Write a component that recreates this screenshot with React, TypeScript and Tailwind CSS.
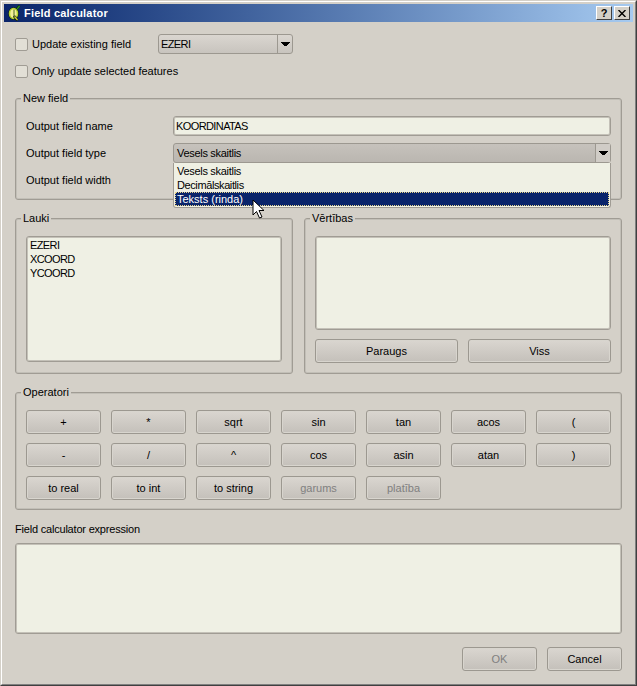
const btn =
  "flex h-[24px] items-center justify-center rounded-[3px] border border-[#9c9890] bg-gradient-to-b from-[#dad6d0] to-[#c4c0ba] text-[11px] shadow-[inset_0_0_0_1px_#d8d5ce]";
const field = "rounded-[3px] border border-[#a09c94] bg-[#eff0e4] shadow-[inset_0_0_0_1px_#c4c1b8]";

function Check({ label }: { label: string }) {
  return (
    <label className="flex items-center gap-[4px]">
      <span className="h-[13px] w-[13px] rounded-[2px] border border-[#a09c94] bg-[#e2dfd6]" />
      <span>{label}</span>
    </label>
  );
}

function Arrow() {
  return (
    <svg width="9" height="5" viewBox="0 0 9 5" className="block">
      <path d="M0 0h9v1h-1v1h-1v1h-1v1h-3v-1h-1v-1h-1v-1h-1z" fill="#000" />
    </svg>
  );
}

function Group({ title, className, children }: { title: string; className?: string; children: React.ReactNode }) {
  return (
    <fieldset className={`m-0 rounded-[3px] border border-[#a09c94] p-0 shadow-[inset_0_0_0_1px_#c2bfb7] ${className ?? ""}`}>
      <legend className="relative ml-[5px] h-[14px] bg-[#d4d0c8] px-[2px] text-[11px] leading-[14px]">{title}</legend>
      {children}
    </fieldset>
  );
}

const ops = [
  "+", "*", "sqrt", "sin", "tan", "acos", "(",
  "-", "/", "^", "cos", "asin", "atan", ")",
  "to real", "to int", "to string",
];

export default function App() {
  return (
    <div className="relative h-[686px] w-[637px] border border-b-[#404040] border-l-[#d4d0c8] border-r-[#404040] border-t-[#d4d0c8] bg-[#d4d0c8] font-['Liberation_Sans',sans-serif] text-[11px] text-black">
      <div className="h-full border border-b-[#808080] border-l-white border-r-[#808080] border-t-white p-[2px]">
        {/* Title bar */}
        <div className="flex h-[18px] items-center bg-gradient-to-r from-[#0a246a] to-[#a6caf0] pl-[4px] pr-[3px]">
          <svg width="14" height="17" viewBox="0 0 14 17" className="mr-[2px] mt-[-1px] shrink-0">
            <path d="M7 7l4.500-5.500" stroke="#0b3a12" strokeWidth="2.600" />
            <path d="M7.500 7l4-5" stroke="#2f9a2a" strokeWidth="1.200" />
            <ellipse cx="5.500" cy="9.500" rx="4" ry="5" fill="#0b1a10" stroke="#0b1a10" strokeWidth="2.400" />
            <ellipse cx="5.500" cy="9.500" rx="4" ry="5" fill="#f2ee9a" stroke="#b4d331" strokeWidth="1.500" />
            <path d="M6 5.500v8" stroke="#4a6a20" strokeWidth="1" />
            <path d="M6 12l3.500 4.500" stroke="#0b1a10" strokeWidth="2.600" />
            <path d="M6.500 12.500l3 3.500" stroke="#d6d43c" strokeWidth="1.200" />
          </svg>
          <span className="text-[11px] font-bold tracking-[0.2px] text-white">Field calculator</span>
          <div className="ml-auto flex gap-[2px]">
            <div className="flex h-[14px] w-[16px] items-center justify-center border border-b-[#404040] border-l-white border-r-[#404040] border-t-white bg-[#d4d0c8] text-[11px] font-bold leading-none">
              ?
            </div>
            <div className="flex h-[14px] w-[16px] items-center justify-center border border-b-[#404040] border-l-white border-r-[#404040] border-t-white bg-[#d4d0c8]">
              <svg width="8" height="7" viewBox="0 0 8 7">
                <path d="M0.500 0l7 7M7.500 0l-7 7" stroke="#000" strokeWidth="1.400" />
              </svg>
            </div>
          </div>
        </div>

        <div className="px-[11px]">
          {/* Update options */}
          <div className="mt-[12px] flex h-[20px] items-center">
            <div className="w-[143px]">
              <Check label="Update existing field" />
            </div>
            <div className="flex h-[20px] w-[135px] rounded-[3px] border border-[#9c9890] bg-gradient-to-b from-[#dad6d0] to-[#c8c4be]">
              <span className="flex-1 pl-[2px] leading-[18px] tracking-[-0.6px]">EZERI</span>
              <span className="flex w-[15px] items-center justify-center border-l border-[#9c9890]">
                <Arrow />
              </span>
            </div>
          </div>
          <div className="mt-[7px] flex h-[20px] items-center">
            <Check label="Only update selected features" />
          </div>

          {/* New field */}
          <Group title="New field" className="mt-[10px]">
            <div className="flex flex-col gap-[7px] px-[10px] pb-[9px] pt-[11px]">
              <div className="flex h-[20px] items-center">
                <span className="w-[147px]">Output field name</span>
                <div className={`h-[20px] flex-1 pl-[2px] leading-[18px] tracking-[-0.6px] ${field}`}>
                  KOORDINATAS
                </div>
              </div>
              <div className="flex h-[20px] items-center">
                <span className="w-[147px]">Output field type</span>
                <div className="flex h-[20px] flex-1 rounded-[3px] border border-[#9c9890] bg-gradient-to-b from-[#c6c2bc] to-[#bab6b0]">
                  <span className="flex-1 pl-[3px] leading-[18px] tracking-[-0.3px]">Vesels skaitlis</span>
                  <span className="flex w-[15px] items-center justify-center border-l border-[#9c9890] bg-[#d0ccc6]">
                    <Arrow />
                  </span>
                </div>
              </div>
              <div className="flex h-[20px] items-center">
                <span>Output field width</span>
              </div>
            </div>
          </Group>

          {/* Fields and values */}
          <div className="mt-[11px] flex gap-[11px]">
            <Group title="Lauki" className="w-[278px]">
              <div className="px-[10px] pb-[11px] pt-[11px]">
                <div className={`h-[126px] pl-[3px] pt-[1px] leading-[14px] tracking-[-0.6px] ${field}`}>
                  <div>EZERI</div>
                  <div>XCOORD</div>
                  <div>YCOORD</div>
                </div>
              </div>
            </Group>
            <Group title="Vērtības" className="flex-1">
              <div className="px-[10px] pb-[10px] pt-[11px]">
                <div className={`h-[94px] ${field}`} />
                <div className="mt-[9px] flex gap-[10px]">
                  <div className={`${btn} flex-1`}>Paraugs</div>
                  <div className={`${btn} flex-1`}>Viss</div>
                </div>
              </div>
            </Group>
          </div>

          {/* Operators */}
          <Group title="Operatori" className="mt-[11px]">
            <div className="grid grid-cols-7 gap-x-[10px] gap-y-[9px] px-[10px] pb-[9px] pt-[11px]">
              {ops.map((op) => (
                <div key={op} className={btn}>
                  {op}
                </div>
              ))}
              <div className={`${btn} text-[#808080]`}>garums</div>
              <div className={`${btn} text-[#808080]`}>platība</div>
            </div>
          </Group>

          {/* Expression */}
          <div className="mt-[12px] h-[14px] leading-[14px] tracking-[-0.2px]">Field calculator expression</div>
          <div className={`mt-[7px] h-[91px] ${field}`} />

          <div className="mt-[13px] flex justify-end gap-[10px]">
            <div className={`${btn} w-[75px] text-[#808080]`}>OK</div>
            <div className={`${btn} w-[75px]`}>Cancel</div>
          </div>
        </div>
      </div>

      {/* Open combo list */}
      <div className="absolute left-[172px] top-[162px] h-[45px] w-[438px] rounded-b-[3px] border border-t-0 border-[#a09c94] bg-[#eff0e4] pl-[1px] pr-[1px] pt-[1px] leading-[14px]">
        <div className="h-[14px] pl-[2px] tracking-[-0.3px]">Vesels skaitlis</div>
        <div className="h-[14px] pl-[2px] tracking-[-0.4px]">Decimālskaitlis</div>
        <div className="h-[14px] border border-dotted border-[#e8d48a] bg-[#0a246a] pl-[1px] leading-[12px] text-white">
          Teksts (rinda)
        </div>
      </div>

      {/* Mouse cursor */}
      <svg width="14" height="21" viewBox="0 0 14 21" className="absolute left-[251px] top-[198px]">
        <path d="M1 1v15l3.500-3.500 3 6.500 2.500-1-3-6.500h5z" fill="#fff" stroke="#000" strokeWidth="1" />
      </svg>
    </div>
  );
}
